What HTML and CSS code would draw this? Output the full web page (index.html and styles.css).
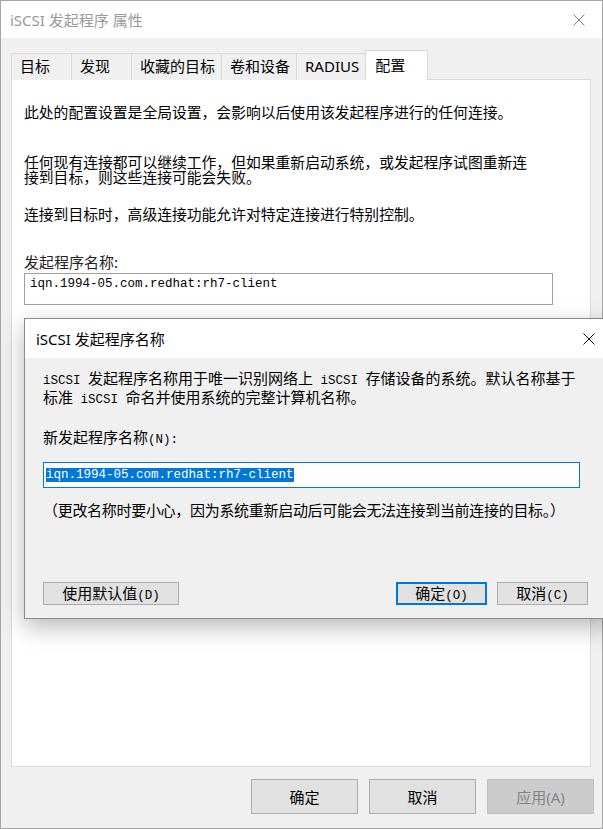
FILE: index.html
```html
<!DOCTYPE html>
<html>
<head>
    <title>iSCSI 发起程序 属性</title>
    <link rel="stylesheet" href="styles.css">
</head>
<body>
    <div class="window">
        <!-- Title bar (inactive) -->
        <div class="titlebar">
            <span class="title">iSCSI 发起程序 属性</span>
            <span class="close close-dim">
                <svg width="12" height="12" viewBox="0 0 12 12"><path d="M0.5 0.5 L11.5 11.5 M11.5 0.5 L0.5 11.5" stroke="currentColor" stroke-width="1" fill="none"/></svg>
            </span>
        </div>

        <div class="content">
            <!-- Tabs -->
            <div class="tabs">
                <div class="tab">目标</div>
                <div class="tab">发现</div>
                <div class="tab">收藏的目标</div>
                <div class="tab">卷和设备</div>
                <div class="tab">RADIUS</div>
                <div class="tab active">配置</div>
            </div>

            <!-- Config page -->
            <div class="panel">
                <p class="para p1">此处的配置设置是全局设置，会影响以后使用该发起程序进行的任何连接。</p>
                <p class="para p2">任何现有连接都可以继续工作，但如果重新启动系统，或发起程序试图重新连<br>接到目标，则这些连接可能会失败。</p>
                <p class="para p3">连接到目标时，高级连接功能允许对特定连接进行特别控制。</p>
                <div class="label">发起程序名称:</div>
                <div class="field">iqn.1994-05.com.redhat:rh7-client</div>
            </div>

            <div class="actions">
                <button class="btn">确定</button>
                <button class="btn">取消</button>
                <button class="btn" disabled>应用(A)</button>
            </div>
        </div>

        <!-- Rename dialog on top -->
        <div class="dialog">
            <div class="dlg-title">
                <span class="title-dark">iSCSI 发起程序名称</span>
                <span class="close">
                    <svg width="12" height="12" viewBox="0 0 12 12"><path d="M0.5 0.5 L11.5 11.5 M11.5 0.5 L0.5 11.5" stroke="currentColor" stroke-width="1" fill="none"/></svg>
                </span>
            </div>
            <div class="dlg-body">
                <p class="dlg-text"><span class="asc">iSCSI </span>发起程序名称用于唯一识别网络上<span class="asc"> iSCSI </span>存储设备的系统。默认名称基于<br>标准<span class="asc"> iSCSI </span>命名并使用系统的完整计算机名称。</p>
                <div class="dlg-label">新发起程序名称<span class="asc">(N):</span></div>
                <div class="dlg-input"><span class="selected">iqn.1994-05.com.redhat:rh7-client</span></div>
                <p class="dlg-note">（更改名称时要小心，因为系统重新启动后可能会无法连接到当前连接的目标。）</p>
                <div class="dlg-buttons">
                    <button class="dbtn wide">使用默认值<span class="asc">(D)</span></button>
                    <button class="dbtn default">确定<span class="asc">(O)</span></button>
                    <button class="dbtn">取消<span class="asc">(C)</span></button>
                </div>
            </div>
        </div>
    </div>
</body>
</html>
```

FILE: styles.css
```css
html, body {
    margin: 0;
    padding: 0;
    overflow: hidden;
    background: #f0f0f0;
}

body {
    font-family: "Noto Sans", "Noto Sans CJK SC", sans-serif;
    font-size: 15px;
    color: #000;
}

/* Outer window */
.window {
    position: relative;
    width: 603px;
    height: 829px;
    box-sizing: border-box;
    border: 1px solid #a6a6a6;
    background: #f0f0f0;
}

.titlebar {
    height: 37px;
    background: #fff;
    display: flex;
    align-items: center;
    justify-content: space-between;
}
.title {
    padding-left: 9px;
    color: #999;
}
.close {
    width: 46px;
    height: 100%;
    display: flex;
    align-items: center;
    justify-content: center;
    color: #111;
}
.close-dim {
    color: #7a7a7a;
}

.content {
    padding: 13px 11px 0 10px;
}

/* Tabs */
.tabs {
    display: flex;
    align-items: flex-end;
    height: 29px;
    margin-bottom: -1px;
    position: relative;
    z-index: 1;
}
.tab {
    box-sizing: border-box;
    height: 27px;
    min-width: 61px;
    padding: 0 6px 0 8px;
    margin-right: -1px;
    border: 1px solid #d9d9d9;
    border-bottom: none;
    background: #f0f0f0;
    line-height: 25px;
    font-family: "Noto Sans", "Noto Sans CJK SC", sans-serif;
    white-space: nowrap;
}
.tab.active {
    height: 30px;
    min-width: 63px;
    padding-left: 9px;
    background: #fff;
    line-height: 28px;
}

/* Page */
.panel {
    box-sizing: border-box;
    height: 688px;
    background: #fff;
    border: 1px solid #d9d9d9;
    padding: 24px 12px 0 12px;
}
.para {
    margin: 0;
    font-family: "Noto Sans CJK SC", sans-serif;
    font-size: 14.8px;
    line-height: 15px;
}
.p2 { margin-top: 35px; }
.p3 { margin-top: 22px; }

.label {
    margin-top: 32px;
    line-height: 18px;
    color: #222;
    font-family: "Noto Sans CJK SC", sans-serif;
}
.field {
    box-sizing: border-box;
    margin-top: 2px;
    width: 529px;
    height: 32px;
    border: 1px solid #a0a0a0;
    padding-left: 5px;
    font-family: "Liberation Mono", monospace;
    font-size: 12.5px;
    line-height: 20px;
}

/* Bottom buttons */
.actions {
    display: flex;
    justify-content: flex-end;
    gap: 11px;
    margin-top: 12px;
    margin-right: -3px;
}
.btn {
    width: 107px;
    height: 35px;
    background: #e1e1e1;
    border: 1px solid #adadad;
    font-family: "Noto Sans", "Noto Sans CJK SC", sans-serif;
    font-size: 15px;
    color: #000;
    padding: 0;
}
.btn:disabled {
    background: #cccccc;
    border-color: #bfbfbf;
    color: #838383;
}

/* Dialog */
.dialog {
    position: absolute;
    left: 23px;
    top: 317px;
    width: 587px;
    border: 1px solid #8a8a8a;
    background: #f0f0f0;
    box-shadow: 0 8px 22px rgba(0, 0, 0, 0.28);
    z-index: 5;
}
.dlg-title {
    height: 39px;
    background: #fff;
    display: flex;
    align-items: center;
    justify-content: space-between;
}
.title-dark {
    padding-left: 11px;
    color: #000;
}
.dlg-body {
    padding: 12px 0 13px 18px;
    font-family: "Noto Sans CJK SC", sans-serif;
    font-size: 15px;
}
.asc {
    font-family: "Liberation Mono", monospace;
    font-size: 12.5px;
    white-space: pre;
}
.dlg-text {
    margin: 0;
    line-height: 16px;
}
.dlg-label {
    margin-top: 21px;
    line-height: 15px;
}
.dlg-input {
    box-sizing: border-box;
    margin-top: 14px;
    width: 537px;
    height: 26px;
    background: #fff;
    border: 1px solid #0078d7;
    padding-left: 2px;
    display: flex;
    align-items: center;
}
.selected {
    background: #0078d7;
    color: #fff;
    font-family: "Liberation Mono", monospace;
    font-size: 12.5px;
    line-height: 14px;
}
.dlg-note {
    margin: 14px 0 0 0;
    line-height: 15px;
    letter-spacing: -0.3px;
}
.dlg-buttons {
    display: flex;
    gap: 10px;
    width: 545px;
    margin-top: 65px;
}
.dbtn {
    box-sizing: border-box;
    width: 91px;
    height: 23px;
    padding: 0;
    background: #e1e1e1;
    border: 1px solid #adadad;
    font-family: "Noto Sans CJK SC", sans-serif;
    font-size: 15px;
    line-height: 20px;
    color: #000;
}
.dbtn.wide {
    width: 136px;
    margin-right: auto;
}
.dbtn.default {
    border-color: #0078d7;
    box-shadow: inset 0 0 0 1px #0078d7;
}
```
